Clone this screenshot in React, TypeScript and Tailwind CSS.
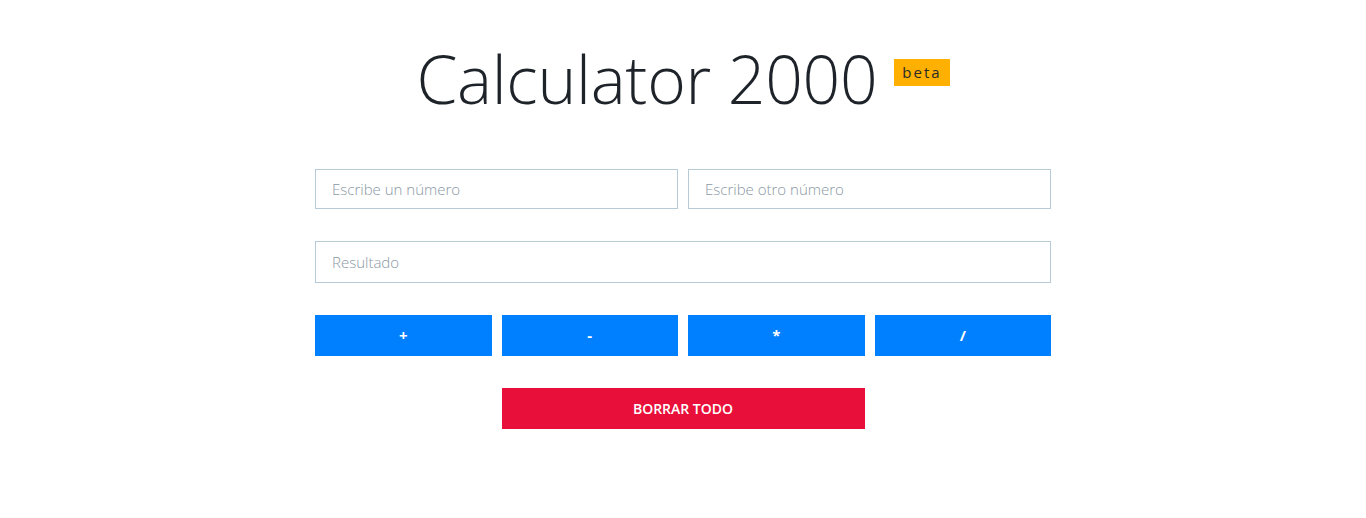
export default function App() {
  const ops = ['+', '-', '*', '/'];
  return (
    <div className="min-h-[518px] bg-white font-['Open_Sans',sans-serif]">
      <div className="mx-auto w-[736px] pt-[38px]">
        {/* Heading */}
        <div className="flex items-start justify-center">
          <h1 className="text-[66px] font-light leading-[80px] text-[#1e232a] tracking-[-0.3px]">Calculator 2000</h1>
          <span className="ml-[17px] mt-[21px] flex h-[27px] items-center bg-[#ffb000] px-[8px] text-[15px] leading-none tracking-[2px] text-[#2a2a2a]">
            beta
          </span>
        </div>

        {/* Form */}
        <div className="mt-[51px] grid grid-cols-4 gap-x-[10px]">
          <input
            className="col-span-2 h-[40px] border border-[#b7cad8] px-[16px] text-[15px] font-light text-[#333] placeholder:text-[#8a98a4] outline-none"
            placeholder="Escribe un número"
          />
          <input
            className="col-span-2 h-[40px] border border-[#b7cad8] px-[16px] text-[15px] font-light text-[#333] placeholder:text-[#8a98a4] outline-none"
            placeholder="Escribe otro número"
          />
          <input
            className="col-span-4 mt-[32px] h-[42px] border border-[#b7cad8] px-[16px] text-[15px] font-light text-[#333] placeholder:text-[#8a98a4] outline-none"
            placeholder="Resultado"
            readOnly
          />
          {ops.map((op) => (
            <button key={op} className="mt-[32px] h-[41px] bg-[#007fff] text-[15px] font-bold text-white">
              {op}
            </button>
          ))}
          <button className="col-span-2 col-start-2 mt-[32px] h-[41px] bg-[#e8103a] text-[14px] font-semibold text-white">
            BORRAR TODO
          </button>
        </div>
      </div>
    </div>
  );
}
